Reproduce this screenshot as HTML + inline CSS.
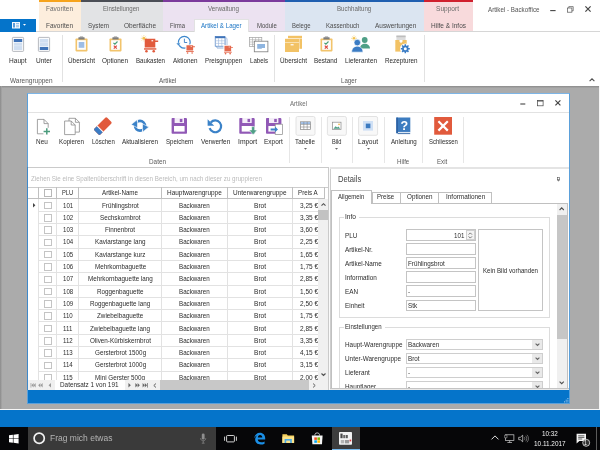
<!DOCTYPE html>
<html lang="de">
<head>
<meta charset="utf-8">
<title>Artikel - Backoffice</title>
<style>
html,body{margin:0;padding:0;background:#ababab;}
body{width:600px;height:450px;overflow:hidden;font-family:"Liberation Sans",sans-serif;}
#root{position:relative;width:600px;height:450px;overflow:hidden;background:#ababab;will-change:transform;}
#root div,#root span,#root svg{position:absolute;box-sizing:border-box;}
.t{white-space:nowrap;line-height:10px;height:10px;font-size:7px;transform-origin:0 50%;}
.i{overflow:visible;}
</style>
</head>
<body>
<div id="root">
<div style="left:0px;top:0px;width:600px;height:86px;background:#fff;"></div>
<div style="left:38.75px;top:0px;width:42.5px;height:31px;background:#fdeedd;"></div>
<div style="left:38.75px;top:0px;width:42.5px;height:2px;background:#f6a31c;"></div>
<span class="t" style="left:46px;top:4px;color:#6a6a6a;transform:scale(0.925,1.0);">Favoriten</span>
<div style="left:81.25px;top:0px;width:81.75px;height:31px;background:#e2e3e5;"></div>
<div style="left:81.25px;top:0px;width:81.75px;height:2px;background:#4b4e56;"></div>
<span class="t" style="left:103px;top:4px;color:#6a6a6a;transform:scale(0.868,1.0);">Einstellungen</span>
<div style="left:163px;top:0px;width:122px;height:31px;background:#ece2f1;"></div>
<div style="left:163px;top:0px;width:122px;height:2px;background:#7c3a9c;"></div>
<span class="t" style="left:208px;top:4px;color:#6a6a6a;transform:scale(0.895,1.0);">Verwaltung</span>
<div style="left:285px;top:0px;width:138.75px;height:31px;background:#dbe5f1;"></div>
<div style="left:285px;top:0px;width:138.75px;height:2px;background:#1f5fb0;"></div>
<span class="t" style="left:336.75px;top:4px;color:#6a6a6a;transform:scale(0.880,1.0);">Buchhaltung</span>
<div style="left:423.75px;top:0px;width:49.5px;height:31px;background:#f8dadc;"></div>
<div style="left:423.75px;top:0px;width:49.5px;height:2px;background:#d0202e;"></div>
<span class="t" style="left:436px;top:4px;color:#6a6a6a;transform:scale(0.938,1.0);">Support</span>
<div style="left:0px;top:31px;width:600px;height:0.8px;background:#d6d6d6;"></div>
<div style="left:0px;top:18.6px;width:36.3px;height:13px;background:#0574ca;"></div>
<svg class="i" style="left:12px;top:21.8px;" width="8" height="6.5" viewBox="0 0 8 6.5"><rect x="0" y="0" width="8" height="6.500" fill="#f4f8fc"/><rect x="1" y="1" width="2" height="4.500" fill="#5a9bd8"/><rect x="4" y="1.200" width="3" height="0.800" fill="#7db2e2"/><rect x="4" y="2.800" width="3" height="0.800" fill="#7db2e2"/><rect x="4" y="4.400" width="3" height="0.800" fill="#7db2e2"/></svg>
<svg class="i" style="left:22.6px;top:24.4px;" width="3" height="1.8" viewBox="0 0 3 1.8"><path d="M0 0h3l-1.5 1.8z" fill="#fff"/></svg>
<div style="left:193.75px;top:18.6px;width:55.5px;height:13.4px;background:#fff;border:0.6px solid #e2e2e2;border-bottom:none;"></div>
<span class="t" style="left:46px;top:21px;color:#4c4c4c;transform:scale(0.925,1.0);">Favoriten</span>
<span class="t" style="left:88px;top:21px;color:#4c4c4c;transform:scale(0.900,1.0);">System</span>
<span class="t" style="left:124px;top:21px;color:#4c4c4c;transform:scale(0.935,1.0);">Oberfläche</span>
<span class="t" style="left:170px;top:21px;color:#4c4c4c;transform:scale(0.839,1.0);">Firma</span>
<span class="t" style="left:257px;top:21px;color:#4c4c4c;transform:scale(0.860,1.0);">Module</span>
<span class="t" style="left:292px;top:21px;color:#4c4c4c;transform:scale(0.849,1.0);">Belege</span>
<span class="t" style="left:325.75px;top:21px;color:#4c4c4c;transform:scale(0.869,1.0);">Kassenbuch</span>
<span class="t" style="left:374.5px;top:21px;color:#4c4c4c;transform:scale(0.922,1.0);">Auswertungen</span>
<span class="t" style="left:430.5px;top:21px;color:#4c4c4c;transform:scale(0.927,1.0);">Hilfe &amp; Infos</span>
<span class="t" style="left:201px;top:21px;color:#1a74c4;transform:scale(0.882,1.0);">Artikel &amp; Lager</span>
<span class="t" style="left:488px;top:5px;color:#555;transform:scale(0.890,1.0);">Artikel - Backoffice</span>
<svg class="i" style="left:550.3px;top:6px;" width="6" height="7" viewBox="0 0 6 7"><path d="M0.2 4.6h5.4" stroke="#444" stroke-width="1.1" fill="none"/></svg>
<svg class="i" style="left:567px;top:6px;" width="7" height="7" viewBox="0 0 7 7"><path d="M1.8 2V0.6h4.4v4.2H4.9" stroke="#555" stroke-width="0.7" fill="none"/><rect x="0.5" y="2" width="4.4" height="4.2" stroke="#555" stroke-width="0.7" fill="none"/></svg>
<svg class="i" style="left:585.2px;top:6.4px;" width="6" height="6" viewBox="0 0 6 6"><path d="M0.4 0.4L5.6 5.6M5.6 0.4L0.4 5.6" stroke="#444" stroke-width="1.2" fill="none"/></svg>
<div style="left:62.4px;top:35px;width:0.7px;height:46.5px;background:#e2e2e2;"></div>
<div style="left:274.3px;top:35px;width:0.7px;height:46.5px;background:#e2e2e2;"></div>
<div style="left:423.7px;top:35px;width:0.7px;height:46.5px;background:#e2e2e2;"></div>
<span class="t" style="left:8.5px;top:55.5px;color:#2c2c2c;transform:scale(0.937,1.0);">Haupt</span>
<svg class="i" style="left:12px;top:37px;" width="12" height="15" viewBox="0 0 12 15"><rect x="0.4" y="0.4" width="11.2" height="14" rx="0.8" fill="#fbfcfd" stroke="#a4a8ae" stroke-width="0.8"/><rect x="1.8" y="2" width="8.4" height="3" fill="#3f73b8"/><rect x="1.800" y="5.600" width="8.400" height="7.400" fill="#cfdef1"/><rect x="1.800" y="8.600" width="8.400" height="0.500" fill="#e8eff8"/></svg>
<span class="t" style="left:35.75px;top:55.5px;color:#2c2c2c;transform:scale(0.935,1.0);">Unter</span>
<svg class="i" style="left:38.4px;top:37px;" width="12" height="15" viewBox="0 0 12 15"><rect x="0.400" y="0.400" width="11.200" height="14" rx="0.800" fill="#fbfcfd" stroke="#a4a8ae" stroke-width="0.800"/><rect x="1.800" y="2" width="8.400" height="7.400" fill="#cfdef1"/><rect x="1.800" y="5" width="8.400" height="0.500" fill="#e8eff8"/><rect x="1.800" y="10" width="8.400" height="3" fill="#3f73b8"/></svg>
<span class="t" style="left:68px;top:55.5px;color:#2c2c2c;transform:scale(0.913,1.0);">Übersicht</span>
<svg class="i" style="left:74.9px;top:36.2px;" width="13" height="16" viewBox="0 0 13 16"><rect x="0.5" y="2.400" width="12" height="13" rx="0.800" fill="#f2c46c"/><rect x="2.100" y="4.200" width="8.800" height="9.600" fill="#fdfdfd"/><rect x="3.400" y="1.200" width="6.200" height="2.400" rx="0.400" fill="#7e7e7e"/><rect x="4.800" y="0.400" width="3.400" height="1.200" rx="0.400" fill="#8c8c8c"/><rect x="3.700" y="6" width="5.600" height="5.800" fill="#9dbde6"/></svg>
<span class="t" style="left:102px;top:55.5px;color:#2c2c2c;transform:scale(0.915,1.0);">Optionen</span>
<svg class="i" style="left:108.7px;top:36.2px;" width="13" height="16" viewBox="0 0 13 16"><rect x="0.5" y="2.400" width="12" height="13" rx="0.800" fill="#f2c46c"/><rect x="2.100" y="4.200" width="8.800" height="9.600" fill="#fdfdfd"/><rect x="3.400" y="1.200" width="6.200" height="2.400" rx="0.400" fill="#7e7e7e"/><rect x="4.800" y="0.400" width="3.400" height="1.200" rx="0.400" fill="#8c8c8c"/><path d="M4.400 6.800l1.500 1.400 2.600-2.700" stroke="#4a9f76" stroke-width="1.100" fill="none"/><path d="M4.800 9.600l3 3M7.800 9.600l-3 3" stroke="#dc4a40" stroke-width="1.200" fill="none"/></svg>
<span class="t" style="left:136px;top:55.5px;color:#2c2c2c;transform:scale(0.877,1.0);">Baukasten</span>
<svg class="i" style="left:0;top:0;" width="600" height="450" viewBox="0 0 600 450"><circle cx="143.9" cy="38.3" r="1.5" fill="#f3c24f"/><path d="M145.90 38.30L147.00 38.30M145.31 39.71L146.09 40.49M143.90 40.30L143.90 41.40M142.49 39.71L141.71 40.49M141.90 38.30L140.80 38.30M142.49 36.89L141.71 36.11M143.90 36.30L143.90 35.20M145.31 36.89L146.09 36.11" stroke="#f3c24f" stroke-width="0.6" fill="none"/><g transform="translate(144.3,38.8) scale(1.43)" fill="#e15a3c"><path d="M0.300 0h7.400v1.200h2v1h-2v3.800H0.300z"/><rect x="5" y="0.900" width="1.200" height="0.900" fill="#fff" opacity="0.9"/><rect x="-0.200" y="6.600" width="8.600" height="1"/><circle cx="1.500" cy="8.700" r="0.900"/><circle cx="6.600" cy="8.700" r="0.900"/></g></svg>
<span class="t" style="left:172.5px;top:55.5px;color:#2c2c2c;transform:scale(0.899,1.0);">Aktionen</span>
<svg class="i" style="left:0;top:0;" width="600" height="450" viewBox="0 0 600 450"><circle cx="184.3" cy="42.3" r="5.900" fill="#fff" stroke="#3b86cc" stroke-width="1.200"/><path d="M184.400 38.700v3.800h2.800" stroke="#3b7cc4" stroke-width="0.900" fill="none"/><path d="M176.200 43.200l2.400 2.800 1.800-3.200z" fill="#3b86cc" stroke="#fff" stroke-width="0.400"/><rect x="185.400" y="44.400" width="10" height="10" fill="#fff"/><g transform="translate(186.2,45.2) scale(0.9)" fill="#e4684c"><path d="M0.300 0h7.400v1.200h2v1h-2v3.800H0.300z"/><rect x="5" y="0.900" width="1.200" height="0.900" fill="#fff" opacity="0.9"/><rect x="-0.200" y="6.600" width="8.600" height="1"/><circle cx="1.500" cy="8.700" r="0.900"/><circle cx="6.600" cy="8.700" r="0.900"/></g></svg>
<span class="t" style="left:204.5px;top:55.5px;color:#2c2c2c;transform:scale(0.895,1.0);">Preisgruppen</span>
<svg class="i" style="left:0;top:0;" width="600" height="450" viewBox="0 0 600 450"><rect x="217.600" y="38.800" width="9.600" height="9.600" fill="#fff" stroke="#a9c0e0" stroke-width="0.600"/><rect x="216.400" y="37.600" width="9.600" height="9.600" fill="#fff" stroke="#8fb0dc" stroke-width="0.600"/><rect x="215.200" y="36.400" width="9.800" height="9.800" fill="#fff" stroke="#4a7fc1" stroke-width="0.700"/><rect x="215.200" y="36.400" width="9.800" height="1.800" fill="#3f73b8"/><path d="M215.200 40.800h9.800M215.200 43.400h9.800M218.500 38.200v8M221.800 38.200v8" stroke="#9fb9dd" stroke-width="0.600"/><rect x="223.400" y="45" width="9.800" height="9.600" fill="#fff"/><g transform="translate(224.2,45.8) scale(0.9)" fill="#e4684c"><path d="M0.300 0h7.400v1.200h2v1h-2v3.800H0.300z"/><rect x="5" y="0.900" width="1.200" height="0.900" fill="#fff" opacity="0.9"/><rect x="-0.200" y="6.600" width="8.600" height="1"/><circle cx="1.500" cy="8.700" r="0.900"/><circle cx="6.600" cy="8.700" r="0.900"/></g></svg>
<span class="t" style="left:249.5px;top:55.5px;color:#2c2c2c;transform:scale(0.873,1.0);">Labels</span>
<svg class="i" style="left:0;top:0;" width="600" height="450" viewBox="0 0 600 450"><rect x="249.400" y="37.400" width="12.400" height="9.200" fill="#fff" stroke="#a0a0a0" stroke-width="0.700"/><path d="M249.400 39.700h12.400M249.400 42h12.400M249.400 44.300h12.400M252.500 37.400v9.200M255.600 37.400v9.200M258.700 37.400v9.200" stroke="#a8a8a8" stroke-width="0.600"/><rect x="254.300" y="41.200" width="13.600" height="10.600" fill="#fff" stroke="#7c7c7c" stroke-width="0.800"/><rect x="257.200" y="44" width="7.800" height="4" fill="#8fb5e0"/><rect x="257.200" y="48" width="4.600" height="1" fill="#a9c6e8"/></svg>
<span class="t" style="left:280px;top:55.5px;color:#2c2c2c;transform:scale(0.913,1.0);">Übersicht</span>
<svg class="i" style="left:0;top:0;" width="600" height="450" viewBox="0 0 600 450"><rect x="288" y="35.800" width="14" height="2.600" fill="#f2c265"/><rect x="288" y="38.800" width="14" height="10" fill="#f2c265"/><rect x="284.600" y="38.400" width="14.800" height="14" fill="#fff"/><rect x="285" y="38.800" width="14" height="3.200" fill="#f2c265"/><rect x="285" y="42.500" width="14" height="9.500" fill="#f2c265"/><rect x="290.600" y="44.200" width="3" height="1.200" fill="#fff"/></svg>
<span class="t" style="left:314.25px;top:55.5px;color:#2c2c2c;transform:scale(0.905,1.0);">Bestand</span>
<svg class="i" style="left:319.57px;top:36.2px;" width="13" height="16" viewBox="0 0 13 16"><rect x="0.5" y="2.400" width="12" height="13" rx="0.800" fill="#f2c46c"/><rect x="2.100" y="4.200" width="8.800" height="9.600" fill="#fdfdfd"/><rect x="3.400" y="1.200" width="6.200" height="2.400" rx="0.400" fill="#7e7e7e"/><rect x="4.800" y="0.400" width="3.400" height="1.200" rx="0.400" fill="#8c8c8c"/><path d="M4.400 6.800l1.500 1.400 2.600-2.700" stroke="#4a9f76" stroke-width="1.100" fill="none"/><path d="M4.800 9.600l3 3M7.800 9.600l-3 3" stroke="#dc4a40" stroke-width="1.200" fill="none"/></svg>
<span class="t" style="left:345px;top:55.5px;color:#2c2c2c;transform:scale(0.914,1.0);">Lieferanten</span>
<svg class="i" style="left:0;top:0;" width="600" height="450" viewBox="0 0 600 450"><circle cx="354" cy="38.3" r="1.3" fill="#f3c24f"/><path d="M355.80 38.30L356.90 38.30M355.27 39.57L356.05 40.35M354.00 40.10L354.00 41.20M352.73 39.57L351.95 40.35M352.20 38.30L351.10 38.30M352.73 37.03L351.95 36.25M354.00 36.50L354.00 35.40M355.27 37.03L356.05 36.25" stroke="#f3c24f" stroke-width="0.6" fill="none"/><circle cx="364.700" cy="40" r="2.900" fill="#4f9f86"/><path d="M359.800 48.600c0-6.600 10.200-6.600 10.200 0z" fill="#4f9f86"/><circle cx="357.300" cy="42.600" r="3.300" fill="#3b7cc4" stroke="#fff" stroke-width="0.700"/><path d="M351.600 52.200c0-8 11.400-8 11.400 0z" fill="#3b7cc4" stroke="#fff" stroke-width="0.700"/></svg>
<span class="t" style="left:385px;top:55.5px;color:#2c2c2c;transform:scale(0.898,1.0);">Rezepturen</span>
<svg class="i" style="left:0;top:0;" width="600" height="450" viewBox="0 0 600 450"><rect x="396.400" y="35.600" width="9.200" height="4.800" fill="#dcdcdc"/><rect x="396.400" y="35.600" width="9.200" height="1.600" fill="#bdbdbd"/><rect x="395.300" y="40" width="11.400" height="11.600" fill="#f2c265"/><path d="M399.500 40h3v1.800l-1.500 1.200-1.500-1.200z" fill="#fff"/><circle cx="405.300" cy="48.700" r="5.300" fill="#fff"/><circle cx="405.300" cy="48.700" r="3.200" fill="#3b7cc4"/><path d="M407.70 48.70L409.80 48.70M407.00 50.40L408.48 51.88M405.30 51.10L405.30 53.20M403.60 50.40L402.12 51.88M402.90 48.70L400.80 48.70M403.60 47.00L402.12 45.52M405.30 46.30L405.30 44.20M407.00 47.00L408.48 45.52" stroke="#3b7cc4" stroke-width="1.500" fill="none"/><circle cx="405.300" cy="48.700" r="1.500" fill="#fff"/></svg>
<span class="t" style="left:9.5px;top:76px;color:#585858;transform:scale(0.923,1.0);">Warengruppen</span>
<span class="t" style="left:159px;top:76px;color:#585858;transform:scale(0.900,1.0);">Artikel</span>
<span class="t" style="left:340.75px;top:76px;color:#585858;transform:scale(0.880,1.0);">Lager</span>
<svg class="i" style="left:588.5px;top:78px;" width="6" height="4" viewBox="0 0 6 4"><path d="M0.6 3.2L3 0.8L5.4 3.2" stroke="#505050" stroke-width="1.1" fill="none"/></svg>
<div style="left:0px;top:85.5px;width:600px;height:323.5px;background:#ababab;"></div>
<div style="left:0px;top:85.5px;width:600px;height:2.2px;background:linear-gradient(#8a8a8a,#a8a8a8);"></div>
<div style="left:0px;top:85.5px;width:1.6px;height:323.5px;background:linear-gradient(90deg,#8a8a8a,#a8a8a8);"></div>
<div style="left:598.7px;top:85.5px;width:1.3px;height:324px;background:#f6f6f6;"></div>
<div style="left:0px;top:408.7px;width:600px;height:1.3px;background:#f6f6f6;"></div>
<div style="left:0px;top:410px;width:600px;height:16.7px;background:#0574ca;"></div>
<div style="left:27px;top:93.3px;width:542.5px;height:310.7px;background:#fff;border:0.9px solid #5ba0da;border-top-color:#7db5e6;"></div>
<span class="t" style="left:289.5px;top:98.8px;color:#6e6e6e;transform:scale(0.874,1.0);">Artikel</span>
<svg class="i" style="left:519.6px;top:100px;" width="6" height="6" viewBox="0 0 6 6"><path d="M0.300 4h5" stroke="#444" stroke-width="1.100" fill="none"/></svg>
<svg class="i" style="left:537px;top:100px;" width="7" height="7" viewBox="0 0 7 7"><rect x="0.5" y="0.6" width="5.6" height="5.2" stroke="#444" stroke-width="0.7" fill="none"/><path d="M0.5 1h5.6" stroke="#444" stroke-width="0.9"/></svg>
<svg class="i" style="left:554.8px;top:100.2px;" width="6" height="6" viewBox="0 0 6 6"><path d="M0.400 0.400L5.400 5.400M5.400 0.400L0.400 5.400" stroke="#444" stroke-width="1.200" fill="none"/></svg>
<div style="left:28px;top:112px;width:540.5px;height:0.8px;background:#e2e2e2;"></div>
<div style="left:289.4px;top:116.5px;width:0.7px;height:46px;background:#e6e6e6;"></div>
<div style="left:321.4px;top:116.5px;width:0.7px;height:46px;background:#e6e6e6;"></div>
<div style="left:352.4px;top:116.5px;width:0.7px;height:46px;background:#e6e6e6;"></div>
<div style="left:384.2px;top:116.5px;width:0.7px;height:46px;background:#e6e6e6;"></div>
<div style="left:422.4px;top:116.5px;width:0.7px;height:46px;background:#e6e6e6;"></div>
<div style="left:463.4px;top:116.5px;width:0.7px;height:46px;background:#e6e6e6;"></div>
<span class="t" style="left:36.25px;top:136.5px;color:#2c2c2c;transform:scale(0.915,1.0);">Neu</span>
<svg class="i" style="left:0;top:0;" width="600" height="450" viewBox="0 0 600 450"><path d="M37.400 119.400h6.600l4.200 4.200v10.200H37.400z" fill="#fff" stroke="#8c8c8c" stroke-width="0.800"/><path d="M44 119.400v4.200h4.200" fill="none" stroke="#8c8c8c" stroke-width="0.800"/><rect x="43.400" y="127.800" width="7" height="7" fill="#fff"/><path d="M46.800 128.200v6.400M43.600 131.400h6.400" stroke="#4a9b7c" stroke-width="1.500"/></svg>
<span class="t" style="left:59.25px;top:136.5px;color:#2c2c2c;transform:scale(0.892,1.0);">Kopieren</span>
<svg class="i" style="left:0;top:0;" width="600" height="450" viewBox="0 0 600 450"><path d="M69 118.300h6.400l4 4v9.800H69z" fill="#fff" stroke="#8c8c8c" stroke-width="0.800"/><path d="M75.400 118.300v4h4" fill="none" stroke="#8c8c8c" stroke-width="0.800"/><path d="M64.600 121h6.600l4 4v9.600H64.600z" fill="#fff" stroke="#8c8c8c" stroke-width="0.800"/><path d="M71.200 121v4h4" fill="none" stroke="#8c8c8c" stroke-width="0.800"/></svg>
<span class="t" style="left:91.75px;top:136.5px;color:#2c2c2c;transform:scale(0.860,1.0);">Löschen</span>
<svg class="i" style="left:0;top:0;" width="600" height="450" viewBox="0 0 600 450"><g transform="rotate(-45 103 126)"><rect x="93.800" y="121.800" width="18" height="8.400" rx="1.400" fill="#e15a3c"/><path d="M95.200 121.800h3.400v8.400h-3.400a1.400 1.400 0 0 1-1.400-1.400v-5.600a1.400 1.400 0 0 1 1.400-1.400z" fill="#3b7cc4"/><rect x="98.400" y="121.800" width="1" height="8.400" fill="#fff"/></g></svg>
<span class="t" style="left:122px;top:136.5px;color:#2c2c2c;transform:scale(0.898,1.0);">Aktualisieren</span>
<svg class="i" style="left:0;top:0;" width="600" height="450" viewBox="0 0 600 450"><circle cx="140" cy="125.800" r="4.900" fill="none" stroke="#3b82c8" stroke-width="2.700"/><path d="M131.200 124.600l6.300-5.200v8.400z" fill="#3b82c8" stroke="#fff" stroke-width="0.600"/><path d="M148.800 127l-6.300 5.200v-8.400z" fill="#3b82c8" stroke="#fff" stroke-width="0.600"/><path d="M137.500 119.600l-0.300 2.500M142.500 132l0.300-2.500" stroke="#fff" stroke-width="0.700"/></svg>
<span class="t" style="left:165.5px;top:136.5px;color:#2c2c2c;transform:scale(0.872,1.0);">Speichern</span>
<svg class="i" style="left:0;top:0;" width="600" height="450" viewBox="0 0 600 450"><g transform="translate(171.6,118) scale(1.0)"><path d="M0.800 0h13.800l0.800 0.800v14.200a0.800 0.800 0 0 1-0.800 0.800H0.800a0.800 0.800 0 0 1-0.800-0.800V0.800a0.800 0.800 0 0 1 0.800-0.800z" fill="#9159b6"/><rect x="3" y="0" width="9.400" height="5" fill="#f4eef8"/><rect x="8.200" y="0.900" width="2.600" height="3.200" fill="#9159b6"/><rect x="2.400" y="8" width="10.600" height="5.600" fill="#fff"/></g></svg>
<span class="t" style="left:200.75px;top:136.5px;color:#2c2c2c;transform:scale(0.928,1.0);">Verwerfen</span>
<svg class="i" style="left:0;top:0;" width="600" height="450" viewBox="0 0 600 450"><path d="M210.800 122.400A5.900 5.900 0 1 1 209.600 128.200" fill="none" stroke="#3b82c8" stroke-width="2.200"/><path d="M207.600 119.200v6.600h6.600z" fill="#3b82c8"/></svg>
<span class="t" style="left:237.5px;top:136.5px;color:#2c2c2c;transform:scale(0.970,1.0);">Import</span>
<svg class="i" style="left:0;top:0;" width="600" height="450" viewBox="0 0 600 450"><g transform="translate(239.3,118) scale(1.0)"><path d="M0.800 0h13.800l0.800 0.800v14.200a0.800 0.800 0 0 1-0.800 0.800H0.800a0.800 0.800 0 0 1-0.800-0.800V0.800a0.800 0.800 0 0 1 0.800-0.800z" fill="#9159b6"/><rect x="3" y="0" width="9.400" height="5" fill="#f4eef8"/><rect x="8.200" y="0.900" width="2.600" height="3.200" fill="#9159b6"/><rect x="2.400" y="8" width="10.600" height="5.600" fill="#fff"/></g><path d="M251.600 126.600h3v3.400h2.600l-4.100 4.800-4.100-4.800h2.600z" fill="#4f9f86" stroke="#fff" stroke-width="0.600"/></svg>
<span class="t" style="left:263.75px;top:136.5px;color:#2c2c2c;transform:scale(0.927,1.0);">Export</span>
<svg class="i" style="left:0;top:0;" width="600" height="450" viewBox="0 0 600 450"><g transform="translate(266,118) scale(1.0)"><path d="M0.800 0h13.800l0.800 0.800v14.200a0.800 0.800 0 0 1-0.800 0.800H0.800a0.800 0.800 0 0 1-0.800-0.800V0.800a0.800 0.800 0 0 1 0.800-0.800z" fill="#9159b6"/><rect x="3" y="0" width="9.400" height="5" fill="#f4eef8"/><rect x="8.200" y="0.900" width="2.600" height="3.200" fill="#9159b6"/><rect x="2.400" y="8" width="10.600" height="5.600" fill="#fff"/></g><rect x="275.200" y="124.200" width="7.400" height="10.400" fill="#fff" stroke="#8a8a8a" stroke-width="0.700"/><path d="M270.600 128.400h4.400v-1.800l3 2.800-3 2.800v-1.800h-4.400z" fill="#3b82c8"/></svg>
<span class="t" style="left:295px;top:136.5px;color:#2c2c2c;transform:scale(0.902,1.0);">Tabelle</span>
<svg class="i" style="left:0;top:0;" width="600" height="450" viewBox="0 0 600 450"><rect x="296" y="116.5" width="19" height="18.8" rx="1.600" fill="#f8f8f8" stroke="#dcdcdc" stroke-width="0.800"/><rect x="300.600" y="121.800" width="9.800" height="7.800" fill="#fff" stroke="#858585" stroke-width="0.700"/><rect x="300.900" y="122.100" width="9.200" height="2" fill="#9dbde6"/><path d="M300.600 124.400h9.800M300.600 127h9.800M303.800 121.800v7.800M307.200 121.800v7.800" stroke="#858585" stroke-width="0.600"/></svg>
<span class="t" style="left:331.75px;top:136.5px;color:#2c2c2c;transform:scale(0.814,1.0);">Bild</span>
<svg class="i" style="left:0;top:0;" width="600" height="450" viewBox="0 0 600 450"><rect x="327.4" y="116.5" width="19" height="18.8" rx="1.600" fill="#f8f8f8" stroke="#dcdcdc" stroke-width="0.800"/><rect x="332.600" y="122.200" width="8.400" height="7.400" fill="#fff" stroke="#8a8a8a" stroke-width="0.700"/><path d="M333.400 128.800l2.200-2.600 1.600 1.400 1.200-1 1.800 2.200z" fill="#4f9f86"/><circle cx="339" cy="124.400" r="0.800" fill="#f2b63c"/></svg>
<span class="t" style="left:358px;top:136.5px;color:#2c2c2c;transform:scale(0.952,1.0);">Layout</span>
<svg class="i" style="left:0;top:0;" width="600" height="450" viewBox="0 0 600 450"><rect x="358.6" y="116.5" width="19" height="18.8" rx="1.600" fill="#f8f8f8" stroke="#dcdcdc" stroke-width="0.800"/><rect x="363" y="121" width="10" height="9.600" fill="#cfe0f5"/><rect x="365.800" y="123.600" width="4.600" height="4.600" fill="#3d7bc0"/></svg>
<span class="t" style="left:390.5px;top:136.5px;color:#2c2c2c;transform:scale(0.882,1.0);">Anleitung</span>
<svg class="i" style="left:0;top:0;" width="600" height="450" viewBox="0 0 600 450"><path d="M396.300 117.600h14v14.600h-12.600l-1.400 1.400z" fill="#3d7cc0"/><rect x="396.300" y="117.600" width="1.700" height="15.600" fill="#2d62a3"/><path d="M397.600 133.600h12.600" stroke="#2d62a3" stroke-width="0.900"/><path d="M398 132.400h12.300" stroke="#e8eef6" stroke-width="0.600"/><text x="404.200" y="129.600" font-family="Liberation Sans,sans-serif" font-size="12.500" font-weight="bold" fill="#fff" text-anchor="middle">?</text></svg>
<span class="t" style="left:428.75px;top:136.5px;color:#2c2c2c;transform:scale(0.849,1.0);">Schliessen</span>
<svg class="i" style="left:0;top:0;" width="600" height="450" viewBox="0 0 600 450"><rect x="434.200" y="117" width="17.800" height="17.700" fill="#e15a3c"/><path d="M438.400 121.200l9.400 9.400M447.800 121.200l-9.400 9.400" stroke="#fff" stroke-width="2.200"/></svg>
<svg class="i" style="left:303.5px;top:148px;" width="3" height="2" viewBox="0 0 3 2"><path d="M0 0h3l-1.5 1.8z" fill="#666"/></svg>
<svg class="i" style="left:335px;top:148px;" width="3" height="2" viewBox="0 0 3 2"><path d="M0 0h3l-1.5 1.8z" fill="#666"/></svg>
<svg class="i" style="left:366.5px;top:148px;" width="3" height="2" viewBox="0 0 3 2"><path d="M0 0h3l-1.5 1.8z" fill="#666"/></svg>
<span class="t" style="left:149px;top:156.9px;color:#5a5a5a;transform:scale(0.910,1.0);">Daten</span>
<span class="t" style="left:397px;top:156.9px;color:#5a5a5a;transform:scale(0.875,1.0);">Hilfe</span>
<span class="t" style="left:437.25px;top:156.9px;color:#5a5a5a;transform:scale(0.878,1.0);">Exit</span>
<div style="left:28px;top:167px;width:301px;height:1px;background:#cacaca;"></div>
<div style="left:330px;top:167px;width:238.5px;height:2px;background:#e4e4e4;"></div>
<div style="left:27px;top:167px;width:1px;height:223px;background:#3f89ca;"></div>
<div style="left:28px;top:168.3px;width:300px;height:222px;background:#fff;"></div>
<span class="t" style="left:31px;top:173.5px;color:#bababa;transform:scale(0.891,1.0);">Ziehen Sie eine Spaltenüberschrift in diesen Bereich, um nach dieser zu gruppieren</span>
<div style="left:28px;top:186.6px;width:300px;height:0.8px;background:#cccccc;"></div>
<div style="left:28px;top:198.4px;width:296.6px;height:0.8px;background:#c0c0c0;"></div>
<div style="left:38.35px;top:187px;width:0.8px;height:11.8px;background:#c0c0c0;"></div>
<div style="left:56.2px;top:187px;width:0.8px;height:11.8px;background:#c0c0c0;"></div>
<div style="left:78.2px;top:187px;width:0.8px;height:11.8px;background:#c0c0c0;"></div>
<div style="left:161.2px;top:187px;width:0.8px;height:11.8px;background:#c0c0c0;"></div>
<div style="left:227.2px;top:187px;width:0.8px;height:11.8px;background:#c0c0c0;"></div>
<div style="left:292.2px;top:187px;width:0.8px;height:11.8px;background:#c0c0c0;"></div>
<div style="left:324.2px;top:187px;width:0.8px;height:11.8px;background:#c0c0c0;"></div>
<span class="t" style="left:61.75px;top:187.8px;color:#2c2c2c;transform:scale(0.826,1.0);">PLU</span>
<span class="t" style="left:102px;top:187.8px;color:#2c2c2c;transform:scale(0.890,1.0);">Artikel-Name</span>
<span class="t" style="left:167px;top:187.8px;color:#2c2c2c;transform:scale(0.920,1.0);">Hauptwarengruppe</span>
<span class="t" style="left:233.25px;top:187.8px;color:#2c2c2c;transform:scale(0.923,1.0);">Unterwarengruppe</span>
<span class="t" style="left:298.2px;top:187.8px;color:#2c2c2c;transform:scale(0.886,1.0);">Preis A</span>
<div style="left:44.2px;top:189px;width:7.6px;height:7.6px;background:#fff;border:0.8px solid #b8b8b8;"></div>
<div id="rows" style="left:28px;top:199px;width:300px;height:180.6px;overflow:hidden;">
<div style="left:10.75px;top:11.7px;width:286px;height:0.8px;background:#e2e2e2;"></div>
<div style="left:16.2px;top:2.7px;width:7.6px;height:7.6px;background:#fff;border:0.7px solid #c4c4c4;"></div>
<span class="t" style="left:34.91px;top:1.5px;color:#2c2c2c;transform:scale(0.871,1.0);">101</span>
<span class="t" style="left:73.72px;top:1.5px;color:#2c2c2c;transform:scale(0.900,1.0);">Frühlingsbrot</span>
<span class="t" style="left:150.81px;top:1.5px;color:#2c2c2c;transform:scale(0.889,1.0);">Backwaren</span>
<span class="t" style="left:225.95px;top:1.5px;color:#2c2c2c;transform:scale(0.943,1.0);">Brot</span>
<span class="t" style="left:271.53px;top:1.5px;color:#2c2c2c;transform:scale(0.929,1.0);">3,25 €</span>
<div style="left:10.75px;top:24px;width:286px;height:0.8px;background:#e2e2e2;"></div>
<div style="left:16.2px;top:15px;width:7.6px;height:7.6px;background:#fff;border:0.7px solid #c4c4c4;"></div>
<span class="t" style="left:34.91px;top:13.8px;color:#2c2c2c;transform:scale(0.871,1.0);">102</span>
<span class="t" style="left:71.79px;top:13.8px;color:#2c2c2c;transform:scale(0.900,1.0);">Sechskornbrot</span>
<span class="t" style="left:150.81px;top:13.8px;color:#2c2c2c;transform:scale(0.889,1.0);">Backwaren</span>
<span class="t" style="left:225.95px;top:13.8px;color:#2c2c2c;transform:scale(0.943,1.0);">Brot</span>
<span class="t" style="left:271.53px;top:13.8px;color:#2c2c2c;transform:scale(0.929,1.0);">3,35 €</span>
<div style="left:10.75px;top:36.3px;width:286px;height:0.8px;background:#e2e2e2;"></div>
<div style="left:16.2px;top:27.3px;width:7.6px;height:7.6px;background:#fff;border:0.7px solid #c4c4c4;"></div>
<span class="t" style="left:34.91px;top:26.1px;color:#2c2c2c;transform:scale(0.871,1.0);">103</span>
<span class="t" style="left:77.04px;top:26.1px;color:#2c2c2c;transform:scale(0.900,1.0);">Finnenbrot</span>
<span class="t" style="left:150.81px;top:26.1px;color:#2c2c2c;transform:scale(0.889,1.0);">Backwaren</span>
<span class="t" style="left:225.95px;top:26.1px;color:#2c2c2c;transform:scale(0.943,1.0);">Brot</span>
<span class="t" style="left:271.53px;top:26.1px;color:#2c2c2c;transform:scale(0.929,1.0);">3,60 €</span>
<div style="left:10.75px;top:48.6px;width:286px;height:0.8px;background:#e2e2e2;"></div>
<div style="left:16.2px;top:39.6px;width:7.6px;height:7.6px;background:#fff;border:0.7px solid #c4c4c4;"></div>
<span class="t" style="left:34.91px;top:38.4px;color:#2c2c2c;transform:scale(0.871,1.0);">104</span>
<span class="t" style="left:66.88px;top:38.4px;color:#2c2c2c;transform:scale(0.900,1.0);">Kaviarstange lang</span>
<span class="t" style="left:150.81px;top:38.4px;color:#2c2c2c;transform:scale(0.889,1.0);">Backwaren</span>
<span class="t" style="left:225.95px;top:38.4px;color:#2c2c2c;transform:scale(0.943,1.0);">Brot</span>
<span class="t" style="left:271.53px;top:38.4px;color:#2c2c2c;transform:scale(0.929,1.0);">2,25 €</span>
<div style="left:10.75px;top:60.9px;width:286px;height:0.8px;background:#e2e2e2;"></div>
<div style="left:16.2px;top:51.9px;width:7.6px;height:7.6px;background:#fff;border:0.7px solid #c4c4c4;"></div>
<span class="t" style="left:34.91px;top:50.7px;color:#2c2c2c;transform:scale(0.871,1.0);">105</span>
<span class="t" style="left:66.89px;top:50.7px;color:#2c2c2c;transform:scale(0.900,1.0);">Kaviarstange kurz</span>
<span class="t" style="left:150.81px;top:50.7px;color:#2c2c2c;transform:scale(0.889,1.0);">Backwaren</span>
<span class="t" style="left:225.95px;top:50.7px;color:#2c2c2c;transform:scale(0.943,1.0);">Brot</span>
<span class="t" style="left:271.53px;top:50.7px;color:#2c2c2c;transform:scale(0.929,1.0);">1,65 €</span>
<div style="left:10.75px;top:73.2px;width:286px;height:0.8px;background:#e2e2e2;"></div>
<div style="left:16.2px;top:64.2px;width:7.6px;height:7.6px;background:#fff;border:0.7px solid #c4c4c4;"></div>
<span class="t" style="left:34.91px;top:63px;color:#2c2c2c;transform:scale(0.871,1.0);">106</span>
<span class="t" style="left:66.53px;top:63px;color:#2c2c2c;transform:scale(0.900,1.0);">Mehrkornbaguette</span>
<span class="t" style="left:150.81px;top:63px;color:#2c2c2c;transform:scale(0.889,1.0);">Backwaren</span>
<span class="t" style="left:225.95px;top:63px;color:#2c2c2c;transform:scale(0.943,1.0);">Brot</span>
<span class="t" style="left:271.53px;top:63px;color:#2c2c2c;transform:scale(0.929,1.0);">1,75 €</span>
<div style="left:10.75px;top:85.5px;width:286px;height:0.8px;background:#e2e2e2;"></div>
<div style="left:16.2px;top:76.5px;width:7.6px;height:7.6px;background:#fff;border:0.7px solid #c4c4c4;"></div>
<span class="t" style="left:34.91px;top:75.3px;color:#2c2c2c;transform:scale(0.871,1.0);">107</span>
<span class="t" style="left:59.7px;top:75.3px;color:#2c2c2c;transform:scale(0.900,1.0);">Mehrkornbaguette lang</span>
<span class="t" style="left:150.81px;top:75.3px;color:#2c2c2c;transform:scale(0.889,1.0);">Backwaren</span>
<span class="t" style="left:225.95px;top:75.3px;color:#2c2c2c;transform:scale(0.943,1.0);">Brot</span>
<span class="t" style="left:271.53px;top:75.3px;color:#2c2c2c;transform:scale(0.929,1.0);">2,85 €</span>
<div style="left:10.75px;top:97.8px;width:286px;height:0.8px;background:#e2e2e2;"></div>
<div style="left:16.2px;top:88.8px;width:7.6px;height:7.6px;background:#fff;border:0.7px solid #c4c4c4;"></div>
<span class="t" style="left:34.91px;top:87.6px;color:#2c2c2c;transform:scale(0.871,1.0);">108</span>
<span class="t" style="left:68.8px;top:87.6px;color:#2c2c2c;transform:scale(0.900,1.0);">Roggenbaguette</span>
<span class="t" style="left:150.81px;top:87.6px;color:#2c2c2c;transform:scale(0.889,1.0);">Backwaren</span>
<span class="t" style="left:225.95px;top:87.6px;color:#2c2c2c;transform:scale(0.943,1.0);">Brot</span>
<span class="t" style="left:271.53px;top:87.6px;color:#2c2c2c;transform:scale(0.929,1.0);">1,50 €</span>
<div style="left:10.75px;top:110.1px;width:286px;height:0.8px;background:#e2e2e2;"></div>
<div style="left:16.2px;top:101.1px;width:7.6px;height:7.6px;background:#fff;border:0.7px solid #c4c4c4;"></div>
<span class="t" style="left:34.91px;top:99.9px;color:#2c2c2c;transform:scale(0.871,1.0);">109</span>
<span class="t" style="left:61.97px;top:99.9px;color:#2c2c2c;transform:scale(0.900,1.0);">Roggenbaguette lang</span>
<span class="t" style="left:150.81px;top:99.9px;color:#2c2c2c;transform:scale(0.889,1.0);">Backwaren</span>
<span class="t" style="left:225.95px;top:99.9px;color:#2c2c2c;transform:scale(0.943,1.0);">Brot</span>
<span class="t" style="left:271.53px;top:99.9px;color:#2c2c2c;transform:scale(0.929,1.0);">2,50 €</span>
<div style="left:10.75px;top:122.4px;width:286px;height:0.8px;background:#e2e2e2;"></div>
<div style="left:16.2px;top:113.4px;width:7.6px;height:7.6px;background:#fff;border:0.7px solid #c4c4c4;"></div>
<span class="t" style="left:35.14px;top:112.2px;color:#2c2c2c;transform:scale(0.871,1.0);">110</span>
<span class="t" style="left:68.98px;top:112.2px;color:#2c2c2c;transform:scale(0.900,1.0);">Zwiebelbaguette</span>
<span class="t" style="left:150.81px;top:112.2px;color:#2c2c2c;transform:scale(0.889,1.0);">Backwaren</span>
<span class="t" style="left:225.95px;top:112.2px;color:#2c2c2c;transform:scale(0.943,1.0);">Brot</span>
<span class="t" style="left:271.53px;top:112.2px;color:#2c2c2c;transform:scale(0.929,1.0);">1,75 €</span>
<div style="left:10.75px;top:134.7px;width:286px;height:0.8px;background:#e2e2e2;"></div>
<div style="left:16.2px;top:125.7px;width:7.6px;height:7.6px;background:#fff;border:0.7px solid #c4c4c4;"></div>
<span class="t" style="left:35.36px;top:124.5px;color:#2c2c2c;transform:scale(0.871,1.0);">111</span>
<span class="t" style="left:62.15px;top:124.5px;color:#2c2c2c;transform:scale(0.900,1.0);">Zwiebelbaguette lang</span>
<span class="t" style="left:150.81px;top:124.5px;color:#2c2c2c;transform:scale(0.889,1.0);">Backwaren</span>
<span class="t" style="left:225.95px;top:124.5px;color:#2c2c2c;transform:scale(0.943,1.0);">Brot</span>
<span class="t" style="left:271.53px;top:124.5px;color:#2c2c2c;transform:scale(0.929,1.0);">2,85 €</span>
<div style="left:10.75px;top:147px;width:286px;height:0.8px;background:#e2e2e2;"></div>
<div style="left:16.2px;top:138px;width:7.6px;height:7.6px;background:#fff;border:0.7px solid #c4c4c4;"></div>
<span class="t" style="left:35.14px;top:136.8px;color:#2c2c2c;transform:scale(0.871,1.0);">112</span>
<span class="t" style="left:61.64px;top:136.8px;color:#2c2c2c;transform:scale(0.900,1.0);">Oliven-Kürbiskernbrot</span>
<span class="t" style="left:150.81px;top:136.8px;color:#2c2c2c;transform:scale(0.889,1.0);">Backwaren</span>
<span class="t" style="left:225.95px;top:136.8px;color:#2c2c2c;transform:scale(0.943,1.0);">Brot</span>
<span class="t" style="left:271.53px;top:136.8px;color:#2c2c2c;transform:scale(0.929,1.0);">3,35 €</span>
<div style="left:10.75px;top:159.3px;width:286px;height:0.8px;background:#e2e2e2;"></div>
<div style="left:16.2px;top:150.3px;width:7.6px;height:7.6px;background:#fff;border:0.7px solid #c4c4c4;"></div>
<span class="t" style="left:35.14px;top:149.1px;color:#2c2c2c;transform:scale(0.871,1.0);">113</span>
<span class="t" style="left:66.53px;top:149.1px;color:#2c2c2c;transform:scale(0.900,1.0);">Gersterbrot 1500g</span>
<span class="t" style="left:150.81px;top:149.1px;color:#2c2c2c;transform:scale(0.889,1.0);">Backwaren</span>
<span class="t" style="left:225.95px;top:149.1px;color:#2c2c2c;transform:scale(0.943,1.0);">Brot</span>
<span class="t" style="left:271.53px;top:149.1px;color:#2c2c2c;transform:scale(0.929,1.0);">4,15 €</span>
<div style="left:10.75px;top:171.6px;width:286px;height:0.8px;background:#e2e2e2;"></div>
<div style="left:16.2px;top:162.6px;width:7.6px;height:7.6px;background:#fff;border:0.7px solid #c4c4c4;"></div>
<span class="t" style="left:35.14px;top:161.4px;color:#2c2c2c;transform:scale(0.871,1.0);">114</span>
<span class="t" style="left:66.53px;top:161.4px;color:#2c2c2c;transform:scale(0.900,1.0);">Gersterbrot 1000g</span>
<span class="t" style="left:150.81px;top:161.4px;color:#2c2c2c;transform:scale(0.889,1.0);">Backwaren</span>
<span class="t" style="left:225.95px;top:161.4px;color:#2c2c2c;transform:scale(0.943,1.0);">Brot</span>
<span class="t" style="left:271.53px;top:161.4px;color:#2c2c2c;transform:scale(0.929,1.0);">3,15 €</span>
<div style="left:10.75px;top:183.9px;width:286px;height:0.8px;background:#e2e2e2;"></div>
<div style="left:16.2px;top:174.9px;width:7.6px;height:7.6px;background:#fff;border:0.7px solid #c4c4c4;"></div>
<span class="t" style="left:35.14px;top:173.7px;color:#2c2c2c;transform:scale(0.871,1.0);">115</span>
<span class="t" style="left:67.06px;top:173.7px;color:#2c2c2c;transform:scale(0.900,1.0);">Mini Gerster 500g</span>
<span class="t" style="left:150.81px;top:173.7px;color:#2c2c2c;transform:scale(0.889,1.0);">Backwaren</span>
<span class="t" style="left:225.95px;top:173.7px;color:#2c2c2c;transform:scale(0.943,1.0);">Brot</span>
<span class="t" style="left:271.53px;top:173.7px;color:#2c2c2c;transform:scale(0.929,1.0);">2,00 €</span>
</div>
<div style="left:38.35px;top:198.8px;width:0.8px;height:180.8px;background:#e2e2e2;"></div>
<div style="left:56.2px;top:198.8px;width:0.8px;height:180.8px;background:#e2e2e2;"></div>
<div style="left:78.2px;top:198.8px;width:0.8px;height:180.8px;background:#e2e2e2;"></div>
<div style="left:161.2px;top:198.8px;width:0.8px;height:180.8px;background:#e2e2e2;"></div>
<div style="left:227.2px;top:198.8px;width:0.8px;height:180.8px;background:#e2e2e2;"></div>
<div style="left:292.2px;top:198.8px;width:0.8px;height:180.8px;background:#e2e2e2;"></div>
<svg class="i" style="left:32.6px;top:203.3px;" width="2.4" height="4.4" viewBox="0 0 2.4 4.4"><path d="M0 0L2.4 2.2L0 4.4z" fill="#444"/></svg>
<div style="left:318.3px;top:199.2px;width:9.7px;height:180.4px;background:#f0f0f0;"></div>
<svg class="i" style="left:320.7px;top:203.3px;" width="5" height="3.2" viewBox="0 0 5 3.2"><path d="M0.5 2.7L2.5 0.7L4.5 2.7" stroke="#505050" stroke-width="1.1" fill="none"/></svg>
<div style="left:318.3px;top:209.5px;width:9.7px;height:10px;background:#c2c2c2;"></div>
<svg class="i" style="left:320.7px;top:373px;" width="5" height="3.2" viewBox="0 0 5 3.2"><path d="M0.5 0.5L2.5 2.5L4.5 0.5" stroke="#505050" stroke-width="1.1" fill="none"/></svg>
<div style="left:28px;top:379.6px;width:300px;height:10.4px;background:#f0f0f0;"></div>
<div style="left:54.5px;top:379.6px;width:70px;height:10.4px;background:#fff;"></div>
<span class="t" style="left:60px;top:380px;color:#2c2c2c;transform:scale(0.911,1.0);">Datensatz 1 von 191</span>
<svg class="i" style="left:29.5px;top:382.8px;" width="24" height="4.6" viewBox="0 0 24 4.6"><g fill="#9a9a9a"><rect x="0.6" y="0" width="0.7" height="4.6"/><path d="M3.6 0v4.6L1.4 2.3z"/><path d="M5.6 0v4.6L3.6 2.3z"/><path d="M10.4 0v4.6L8.2 2.3z"/><path d="M12.6 0v4.6L10.4 2.3z"/><path d="M21 0v4.6L18.6 2.3z"/></g></svg>
<svg class="i" style="left:127px;top:382.8px;" width="24" height="4.6" viewBox="0 0 24 4.6"><g fill="#666"><path d="M1.4 0v4.6L3.8 2.3z"/><path d="M8.4 0v4.6L10.6 2.3z"/><path d="M10.6 0v4.6L12.8 2.3z"/><path d="M15.6 0v4.6L17.8 2.3z"/><path d="M17.8 0v4.6L20 2.3z"/><rect x="20.2" y="0" width="0.7" height="4.6"/></g></svg>
<svg class="i" style="left:152.5px;top:382.6px;" width="4" height="5" viewBox="0 0 4 5"><path d="M3 0.5L0.8 2.5L3 4.5" stroke="#555" stroke-width="0.9" fill="none"/></svg>
<div style="left:160px;top:379.6px;width:149px;height:10.4px;background:#c8c8c8;"></div>
<svg class="i" style="left:311.5px;top:382.6px;" width="4" height="5" viewBox="0 0 4 5"><path d="M1 0.5L3.2 2.5L1 4.5" stroke="#555" stroke-width="0.9" fill="none"/></svg>
<div style="left:328px;top:168px;width:1px;height:222px;background:#cacaca;"></div>
<div style="left:329px;top:167px;width:1px;height:223px;background:#fafafa;"></div>
<div style="left:330px;top:169.3px;width:238.5px;height:220.7px;background:#fff;border-left:0.8px solid #cdcdcd;"></div>
<span class="t" style="left:337.6px;top:174.6px;color:#444;transform:scale(1.084,1.2);">Details</span>
<svg class="i" style="left:556.5px;top:177px;" width="3" height="4.4" viewBox="0 0 3 4.4"><rect x="0.5" y="0.3" width="2" height="2.6" fill="none" stroke="#555" stroke-width="0.6"/><path d="M0 3h3M1.5 3v1.4" stroke="#555" stroke-width="0.6"/></svg>
<div style="left:331px;top:203px;width:236.8px;height:187px;background:#fff;border:0.8px solid #c0c0c0;border-bottom:none;"></div>
<div style="left:371.5px;top:191.7px;width:29.3px;height:12px;background:#fff;border:0.8px solid #c0c0c0;"></div>
<div style="left:400px;top:191.7px;width:39px;height:12px;background:#fff;border:0.8px solid #c0c0c0;"></div>
<div style="left:438.2px;top:191.7px;width:53.8px;height:12px;background:#fff;border:0.8px solid #c0c0c0;"></div>
<div style="left:331px;top:190px;width:41px;height:14px;background:#fff;border:0.8px solid #c0c0c0;border-bottom:none;"></div>
<span class="t" style="left:338px;top:192.2px;color:#2c2c2c;transform:scale(0.854,1.0);">Allgemein</span>
<span class="t" style="left:376.75px;top:192.2px;color:#2c2c2c;transform:scale(0.869,1.0);">Preise</span>
<span class="t" style="left:407px;top:192.2px;color:#2c2c2c;transform:scale(0.898,1.0);">Optionen</span>
<span class="t" style="left:445.75px;top:192.2px;color:#2c2c2c;transform:scale(0.917,1.0);">Informationen</span>
<div style="left:557px;top:203.8px;width:10px;height:186.2px;background:#f0f0f0;"></div>
<div style="left:557px;top:214.8px;width:10px;height:124px;background:#c6c6c6;"></div>
<svg class="i" style="left:559.3px;top:206.7px;" width="5.4" height="3.6" viewBox="0 0 5.4 3.6"><path d="M0.6 3L2.7 0.9L4.8 3" stroke="#505050" stroke-width="1.1" fill="none"/></svg>
<svg class="i" style="left:559.3px;top:380.8px;" width="5.4" height="3.6" viewBox="0 0 5.4 3.6"><path d="M0.6 0.6L2.7 2.7L4.8 0.6" stroke="#505050" stroke-width="1.1" fill="none"/></svg>
<div style="left:338.6px;top:217.3px;width:211.2px;height:100.4px;border:0.8px solid #dcdcdc;"></div>
<div style="left:343.5px;top:212px;width:15.5px;height:10px;background:#fff;"></div>
<span class="t" style="left:345.1px;top:212.2px;color:#2c2c2c;transform:scale(0.943,1.0);">Info</span>
<span class="t" style="left:345.1px;top:230.7px;color:#2c2c2c;transform:scale(0.907,1.0);">PLU</span>
<div style="left:406.2px;top:229.4px;width:69.4px;height:11.2px;background:#fff;border:0.8px solid #c4c4c4;"></div>
<span class="t" style="left:345.1px;top:244.72px;color:#2c2c2c;transform:scale(0.907,1.0);">Artikel-Nr.</span>
<div style="left:406.2px;top:243.42px;width:69.4px;height:11.2px;background:#fff;border:0.8px solid #c4c4c4;"></div>
<span class="t" style="left:345.1px;top:258.74px;color:#2c2c2c;transform:scale(0.907,1.0);">Artikel-Name</span>
<div style="left:406.2px;top:257.44px;width:69.4px;height:11.2px;background:#fff;border:0.8px solid #c4c4c4;"></div>
<span class="t" style="left:408px;top:258.74px;color:#2c2c2c;transform:scale(0.900,1.0);">Frühlingsbrot</span>
<span class="t" style="left:345.1px;top:272.76px;color:#2c2c2c;transform:scale(0.907,1.0);">Information</span>
<div style="left:406.2px;top:271.46px;width:69.4px;height:11.2px;background:#fff;border:0.8px solid #c4c4c4;"></div>
<span class="t" style="left:345.1px;top:286.78px;color:#2c2c2c;transform:scale(0.907,1.0);">EAN</span>
<div style="left:406.2px;top:285.48px;width:69.4px;height:11.2px;background:#fff;border:0.8px solid #c4c4c4;"></div>
<span class="t" style="left:408px;top:286.78px;color:#2c2c2c;transform:scale(0.900,1.0);">-</span>
<span class="t" style="left:345.1px;top:300.8px;color:#2c2c2c;transform:scale(0.907,1.0);">Einheit</span>
<div style="left:406.2px;top:299.5px;width:69.4px;height:11.2px;background:#fff;border:0.8px solid #c4c4c4;"></div>
<span class="t" style="left:408px;top:300.8px;color:#2c2c2c;transform:scale(0.900,1.0);">Stk</span>
<span class="t" style="left:453.96px;top:230.7px;color:#2c2c2c;transform:scale(0.886,1.0);">101</span>
<div style="left:466.4px;top:230.2px;width:8.6px;height:9.8px;background:#f4f4f4;border:0.7px solid #cfcfcf;"></div>
<svg class="i" style="left:468.4px;top:231.6px;" width="4.6" height="7" viewBox="0 0 4.6 7"><path d="M0.6 2.6L2.3 0.9L4 2.6M0.6 4.4L2.3 6.1L4 4.4" stroke="#555" stroke-width="0.8" fill="none"/></svg>
<div style="left:478.4px;top:229.4px;width:64.3px;height:81.3px;background:#fff;border:0.8px solid #c4c4c4;"></div>
<span class="t" style="left:482.5px;top:265.9px;color:#2c2c2c;transform:scale(0.878,1.0);">Kein Bild vorhanden</span>
<div style="left:338.6px;top:327.3px;width:211.2px;height:60.3px;border:0.8px solid #dcdcdc;border-bottom:none;"></div>
<div style="left:343.5px;top:321.5px;width:41px;height:10px;background:#fff;"></div>
<span class="t" style="left:345.1px;top:322.1px;color:#2c2c2c;transform:scale(0.871,1.0);">Einstellungen</span>
<div id="combos" style="left:338px;top:335px;width:215px;height:52.6px;overflow:hidden;">
<span class="t" style="left:7.1px;top:5px;color:#2c2c2c;transform:scale(0.910,1.0);">Haupt-Warengruppe</span>
<div style="left:68.2px;top:4px;width:136.4px;height:11.2px;background:#fff;border:0.8px solid #cecece;"></div>
<div style="left:194.2px;top:4.8px;width:9.6px;height:9.6px;background:#e9e9e9;"></div>
<svg class="i" style="left:197px;top:8.2px;" width="5" height="3.4" viewBox="0 0 5 3.4"><path d="M0.6 0.6L2.5 2.5L4.4 0.6" stroke="#666" stroke-width="1.1" fill="none"/></svg>
<span class="t" style="left:70px;top:4.6px;color:#2c2c2c;transform:scale(0.900,1.0);">Backwaren</span>
<span class="t" style="left:7.1px;top:19.05px;color:#2c2c2c;transform:scale(0.910,1.0);">Unter-Warengruppe</span>
<div style="left:68.2px;top:18.05px;width:136.4px;height:11.2px;background:#fff;border:0.8px solid #cecece;"></div>
<div style="left:194.2px;top:18.85px;width:9.6px;height:9.6px;background:#e9e9e9;"></div>
<svg class="i" style="left:197px;top:22.25px;" width="5" height="3.4" viewBox="0 0 5 3.4"><path d="M0.6 0.6L2.5 2.5L4.4 0.6" stroke="#666" stroke-width="1.1" fill="none"/></svg>
<span class="t" style="left:70px;top:18.65px;color:#2c2c2c;transform:scale(0.900,1.0);">Brot</span>
<span class="t" style="left:7.1px;top:33.1px;color:#2c2c2c;transform:scale(0.910,1.0);">Lieferant</span>
<div style="left:68.2px;top:32.1px;width:136.4px;height:11.2px;background:#fff;border:0.8px solid #cecece;"></div>
<div style="left:194.2px;top:32.9px;width:9.6px;height:9.6px;background:#e9e9e9;"></div>
<svg class="i" style="left:197px;top:36.3px;" width="5" height="3.4" viewBox="0 0 5 3.4"><path d="M0.6 0.6L2.5 2.5L4.4 0.6" stroke="#666" stroke-width="1.1" fill="none"/></svg>
<span class="t" style="left:70px;top:32.7px;color:#2c2c2c;transform:scale(0.900,1.0);">-</span>
<span class="t" style="left:7.1px;top:47.15px;color:#2c2c2c;transform:scale(0.910,1.0);">Hauptlager</span>
<div style="left:68.2px;top:46.15px;width:136.4px;height:11.2px;background:#fff;border:0.8px solid #cecece;"></div>
<div style="left:194.2px;top:46.95px;width:9.6px;height:9.6px;background:#e9e9e9;"></div>
<svg class="i" style="left:197px;top:50.35px;" width="5" height="3.4" viewBox="0 0 5 3.4"><path d="M0.6 0.6L2.5 2.5L4.4 0.6" stroke="#666" stroke-width="1.1" fill="none"/></svg>
<span class="t" style="left:70px;top:46.75px;color:#2c2c2c;transform:scale(0.900,1.0);">-</span>
</div>
<div style="left:330px;top:387.6px;width:238.5px;height:2.2px;background:#e9e9e9;border-top:0.8px solid #c4c4c4;"></div>
<div style="left:28px;top:389.8px;width:540.5px;height:13.4px;background:#0574ca;"></div>
<svg class="i" style="left:564.4px;top:398.4px;" width="4.4" height="4.4" viewBox="0 0 4.4 4.4"><g fill="#a9cdee"><rect x="3.400" y="0" width="1" height="1"/><rect x="3.400" y="1.700" width="1" height="1"/><rect x="3.400" y="3.400" width="1" height="1"/><rect x="1.700" y="1.700" width="1" height="1"/><rect x="1.700" y="3.400" width="1" height="1"/><rect x="0" y="3.400" width="1" height="1"/></g></svg>
<div style="left:0px;top:426.7px;width:600px;height:23.3px;background:#060608;"></div>
<div style="left:28px;top:426.7px;width:188px;height:23.3px;background:#3a3a3a;"></div>
<svg class="i" style="left:9.3px;top:433.6px;" width="9.6" height="9.6" viewBox="0 0 9.6 9.6"><g fill="#fff"><path d="M0 1.35L3.9 0.8V4.5H0z"/><path d="M4.5 0.72L9.6 0V4.5H4.5z"/><path d="M0 5.1H3.9V8.8L0 8.25z"/><path d="M4.5 5.1H9.6V9.6L4.5 8.88z"/></g></svg>
<svg class="i" style="left:33px;top:432.2px;" width="12.4" height="12.4" viewBox="0 0 12.4 12.4"><circle cx="6.2" cy="6.2" r="5.1" fill="none" stroke="#f2f2f2" stroke-width="1.7"/></svg>
<span class="t" style="left:49.6px;top:434.2px;color:#b4b4b4;transform:scale(1.215,1.22);">Frag mich etwas</span>
<svg class="i" style="left:199.8px;top:432.6px;" width="6.4" height="11" viewBox="0 0 6.4 11"><rect x="1.800" y="0.400" width="2.800" height="6.200" rx="1.400" fill="#8e8e8e"/><path d="M0.600 5.200c0 3.400 5.200 3.400 5.200 0M3.200 7.900v2.200M1.800 10.200h2.800" stroke="#8e8e8e" stroke-width="0.700" fill="none"/></svg>
<svg class="i" style="left:223.5px;top:434.6px;" width="13" height="7.4" viewBox="0 0 13 7.4"><rect x="2.6" y="0.5" width="7.8" height="6.4" rx="0.8" fill="none" stroke="#e6e6e6" stroke-width="0.9"/><path d="M0.6 1.6v4.2M12.4 1.6v4.2" stroke="#e6e6e6" stroke-width="0.9"/></svg>
<svg class="i" style="left:252.8px;top:431.8px;" width="13" height="13" viewBox="0 0 13 13"><g transform="scale(1.08)"><path d="M1.2 5.6C1.6 2.4 3.8 0.6 6.4 0.6c3 0 4.9 2.2 4.9 5.2v1.1H4.4c0.1 1.6 1.4 2.6 3.2 2.6 1.2 0 2.2-0.3 3.1-0.8v2.1c-1 0.5-2.2 0.8-3.6 0.8C3.9 11.6 2 9.6 2 7c0-1.7 0.9-3.1 2.3-3.9C3 3.5 1.9 4.4 1.2 5.6zM4.5 5.1h4.1C8.6 3.7 7.800 2.800 6.500 2.800 5.300 2.800 4.600 3.800 4.500 5.100z" fill="#1b8fe6"/></g></svg>
<svg class="i" style="left:282px;top:433.2px;" width="12.5" height="10.4" viewBox="0 0 12.5 10.4"><path d="M0.4 1.2h4.4l1 1.2h6.3v7.6H0.400z" fill="#f5cf5b"/><rect x="0.4" y="3.6" width="11.7" height="6.4" fill="#fbe28a"/><rect x="2.6" y="6" width="7.2" height="4" fill="#49a8e8"/><rect x="4.2" y="7.6" width="4" height="2.4" fill="#fbe28a"/></svg>
<svg class="i" style="left:310.5px;top:431.6px;" width="12.4" height="12.6" viewBox="0 0 12.4 12.6"><path d="M4 3.6V2.4c0-2 4.4-2 4.4 0v1.200" fill="none" stroke="#e8e8e8" stroke-width="0.800"/><path d="M0.800 3.600h10.800l-0.600 8.600H1.400z" fill="#f4f4f4"/><rect x="3.3" y="5.4" width="2.6" height="2.500" fill="#f25022"/><rect x="6.4" y="5.4" width="2.600" height="2.500" fill="#7fba00"/><rect x="3.300" y="8.300" width="2.600" height="2.500" fill="#00a4ef"/><rect x="6.400" y="8.300" width="2.600" height="2.500" fill="#ffb900"/></svg>
<div style="left:332px;top:426.7px;width:28px;height:23.3px;background:#3d3d3d;"></div>
<div style="left:332px;top:448.6px;width:28px;height:1.4px;background:#76b9ed;"></div>
<svg class="i" style="left:339px;top:431.7px;" width="13" height="12.7" viewBox="0 0 13 12.7"><rect x="0" y="0" width="13" height="12.700" rx="0.800" fill="#f3f3f3"/><rect x="1.400" y="1.600" width="2.200" height="4.600" fill="#4a4a4a"/><rect x="4.300" y="3" width="1.600" height="3.200" fill="#5a5a5a"/><rect x="6.600" y="3" width="2.200" height="3.200" fill="#5a5a5a"/><rect x="1.800" y="8" width="3.200" height="3.400" fill="#b4b4b4"/><rect x="5.800" y="8" width="4.400" height="3.400" fill="#9a9a9a"/><rect x="10.600" y="7.600" width="1.600" height="1.800" fill="#e0383e"/></svg>
<svg class="i" style="left:491px;top:435.4px;" width="8" height="5" viewBox="0 0 8 5"><path d="M0.5 4.4L4 0.9L7.5 4.4" stroke="#e0e0e0" stroke-width="1" fill="none"/></svg>
<svg class="i" style="left:504px;top:434.4px;" width="10.6" height="9" viewBox="0 0 10.6 9"><rect x="1.5" y="0.8" width="8.4" height="5.8" fill="none" stroke="#d4d4d4" stroke-width="0.7"/><path d="M3.4 8.500h4.600M5.700 6.600v1.900" stroke="#d4d4d4" stroke-width="0.7" fill="none"/><path d="M0.600 1.200h2.400v2.600H0.600z" fill="#060608" stroke="#c8c8c8" stroke-width="0.5"/></svg>
<svg class="i" style="left:518px;top:433.8px;" width="10.4" height="9" viewBox="0 0 10.4 9"><path d="M0.700 3.300h1.700l2.300-2.100v6.600L2.400 5.700H0.700z" fill="none" stroke="#dcdcdc" stroke-width="0.7"/><path d="M6.300 3c0.700 0.900 0.700 2.200 0 3.100M7.700 1.800c1.400 1.600 1.400 3.900 0 5.500M9 0.800c2 2.200 2 5.300 0 7.500" fill="none" stroke="#b0b0b0" stroke-width="0.55"/></svg>
<span class="t" style="left:541.6px;top:429.2px;color:#f4f4f4;transform:scale(0.902,1.15);">10:32</span>
<span class="t" style="left:534px;top:439.2px;color:#f4f4f4;transform:scale(0.916,1.15);">10.11.2017</span>
<div style="left:596.4px;top:426.7px;width:0.6px;height:23.3px;background:#5a5a5a;"></div>
<svg class="i" style="left:575.6px;top:433px;" width="14" height="14" viewBox="0 0 14 14"><path d="M0.600 0.800h9.400v7.200H3.400L0.600 10.400z" fill="#f4f4f4"/><path d="M2.200 2.800h6.200M2.200 4.400h6.200M2.200 6h4" stroke="#222" stroke-width="0.700"/><circle cx="10.200" cy="9.800" r="3.500" fill="#333" stroke="#e4e4e4" stroke-width="0.800"/></svg>
<span class="t" style="left:584.3px;top:437.9px;color:#fff;transform:scale(0.771,1.0);">1</span>
</div>
</body>
</html>
